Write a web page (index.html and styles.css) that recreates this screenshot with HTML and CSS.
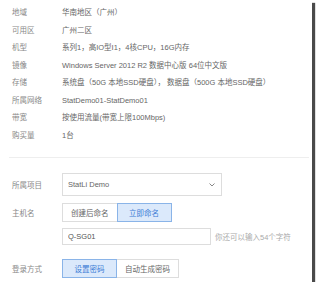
FILE: index.html
```html
<!DOCTYPE html>
<html lang="zh-CN">
<head>
    <meta charset="UTF-8">
    <meta name="viewport" content="width=device-width, initial-scale=1.0">
    <title>云主机配置</title>
    <link rel="stylesheet" href="styles.css">
</head>
<body>
    <div class="frame">
        <div class="info">
            <div class="row"><span class="label">地域</span><span class="value">华南地区（广州）</span></div>
            <div class="row"><span class="label">可用区</span><span class="value">广州二区</span></div>
            <div class="row"><span class="label">机型</span><span class="value">系列1，高IO型I1，4核CPU，16G内存</span></div>
            <div class="row"><span class="label">镜像</span><span class="value">Windows Server 2012 R2 数据中心版 64位中文版</span></div>
            <div class="row"><span class="label">存储</span><span class="value">系统盘（50G 本地SSD硬盘）， 数据盘（500G 本地SSD硬盘）</span></div>
            <div class="row"><span class="label">所属网络</span><span class="value">StatDemo01-StatDemo01</span></div>
            <div class="row"><span class="label">带宽</span><span class="value">按使用流量(带宽上限100Mbps)</span></div>
            <div class="row"><span class="label">购买量</span><span class="value">1台</span></div>
        </div>

        <div class="divider"></div>

        <div class="form">
            <div class="field field-project">
                <span class="label">所属项目</span>
                <div class="select">
                    <span>StatLi Demo</span>
                    <svg width="6" height="4" viewBox="0 0 6 4"><polyline points="0.5,0.5 3,3 5.5,0.5" fill="none" stroke="#888" stroke-width="1"/></svg>
                </div>
            </div>

            <div class="field field-host">
                <span class="label">主机名</span>
                <div class="btn-group">
                    <button class="btn">创建后命名</button>
                    <button class="btn active">立即命名</button>
                </div>
            </div>

            <div class="field field-input">
                <span class="label"></span>
                <div class="input-line">
                    <input class="text-input" type="text" value="Q-SG01">
                    <span class="hint">你还可以输入54个字符</span>
                </div>
            </div>

            <div class="field field-login">
                <span class="label">登录方式</span>
                <div class="btn-group">
                    <button class="btn active">设置密码</button>
                    <button class="btn">自动生成密码</button>
                </div>
            </div>
        </div>
    </div>
</body>
</html>
```

FILE: styles.css
```css
* {
    margin: 0;
    padding: 0;
    box-sizing: border-box;
}

body {
    font-family: "Liberation Sans", "Noto Sans CJK SC", sans-serif;
    font-size: 7.5px;
    color: #666;
    background: #fff;
}

.frame {
    width: 312px;
    height: 282px;
    padding: 4px 7px 0 12px;
    background: #fff;
    box-shadow: 3px 3px 1px #4a4a4a;
}

.row {
    display: grid;
    grid-template-columns: 50px 1fr;
    line-height: 17.5px;
    white-space: nowrap;
}

.label {
    color: #888;
}

.value {
    color: #666;
}

.divider {
    margin: 13px -4px 0 -3px;
    border-top: 1px solid #eee;
}

.form {
    padding-top: 15px;
}

.field {
    display: grid;
    grid-template-columns: 50px auto;
    align-items: center;
    justify-content: start;
}

.field-host {
    margin-top: 7px;
}

.field-input {
    margin-top: 6px;
}

.field-login {
    margin-top: 14px;
}

.select {
    width: 160px;
    height: 23px;
    border: 1px solid #ddd;
    padding: 0 6px 0 5px;
    display: flex;
    align-items: center;
    justify-content: space-between;
    color: #666;
}

.btn-group {
    display: flex;
}

.btn {
    height: 19px;
    min-width: 55px;
    padding: 0 8px;
    font: inherit;
    color: #666;
    background: #fff;
    border: 1px solid #ddd;
}

.btn + .btn {
    margin-left: -1px;
}

.btn.active {
    position: relative;
    color: #3a7bd5;
    background: #dbe9fb;
    border-color: #8ab4e8;
}

.input-line {
    display: flex;
    align-items: center;
    gap: 4px;
}

.text-input {
    width: 149px;
    height: 17px;
    padding: 0 5px;
    font: inherit;
    color: #555;
    border: 1px solid #ddd;
    outline: none;
}

.hint {
    color: #aaa;
    white-space: nowrap;
}
```
